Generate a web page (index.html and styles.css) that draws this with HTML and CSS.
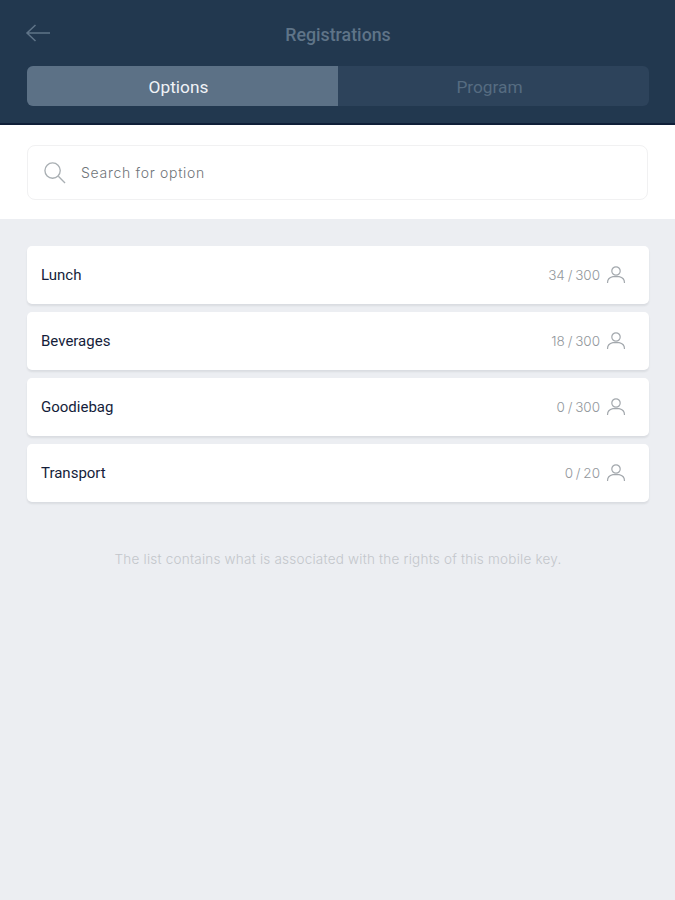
FILE: index.html
```html
<!DOCTYPE html>
<html lang="en">
<head>
    <meta charset="UTF-8">
    <meta name="viewport" content="width=device-width, initial-scale=1.0">
    <title>Registrations</title>
    <link rel="stylesheet" href="styles.css">
</head>
<body>
    <header class="header">
        <div class="topbar">
            <svg class="back-icon" width="26" height="20" viewBox="0 0 26 20" fill="none" stroke="#5f7488" stroke-width="1.5">
                <path d="M25 10H2M10.500 2L2 10l8.500 8"/>
            </svg>
            <h1 class="title">Registrations</h1>
        </div>
        <div class="tabs">
            <div class="tab tab-active">Options</div>
            <div class="tab">Program</div>
        </div>
    </header>

    <section class="search-section">
        <div class="search">
            <svg class="search-icon" width="23" height="23" viewBox="0 0 24 24" fill="none" stroke="#a9afb3" stroke-width="1.4">
                <circle cx="10" cy="10" r="8"/>
                <path d="M16 16l7 7"/>
            </svg>
            <span class="search-text">Search for option</span>
        </div>
    </section>

    <main class="content">
        <div class="list">
            <div class="row">
                <span class="row-name">Lunch</span>
                <span class="row-count">34 / 300</span>
                <svg class="person" width="20" height="20" viewBox="0 0 20 20" fill="none" stroke="#a3a8ad" stroke-width="1.2">
                    <circle cx="10" cy="6" r="4.200"/>
                    <path d="M1.500 18c0-3.500 2.500-5.700 5.300-6.300M18.500 18c0-3.500-2.500-5.700-5.300-6.300M6.800 11.700h6.400"/>
                </svg>
            </div>
            <div class="row">
                <span class="row-name">Beverages</span>
                <span class="row-count">18 / 300</span>
                <svg class="person" width="20" height="20" viewBox="0 0 20 20" fill="none" stroke="#a3a8ad" stroke-width="1.2">
                    <circle cx="10" cy="6" r="4.200"/>
                    <path d="M1.500 18c0-3.500 2.500-5.700 5.300-6.300M18.500 18c0-3.500-2.500-5.700-5.300-6.300M6.800 11.700h6.400"/>
                </svg>
            </div>
            <div class="row">
                <span class="row-name">Goodiebag</span>
                <span class="row-count">0 / 300</span>
                <svg class="person" width="20" height="20" viewBox="0 0 20 20" fill="none" stroke="#a3a8ad" stroke-width="1.2">
                    <circle cx="10" cy="6" r="4.200"/>
                    <path d="M1.500 18c0-3.500 2.500-5.700 5.300-6.300M18.500 18c0-3.500-2.500-5.700-5.300-6.300M6.800 11.700h6.400"/>
                </svg>
            </div>
            <div class="row">
                <span class="row-name">Transport</span>
                <span class="row-count">0 / 20</span>
                <svg class="person" width="20" height="20" viewBox="0 0 20 20" fill="none" stroke="#a3a8ad" stroke-width="1.2">
                    <circle cx="10" cy="6" r="4.200"/>
                    <path d="M1.500 18c0-3.500 2.500-5.700 5.300-6.300M18.500 18c0-3.500-2.500-5.700-5.300-6.300M6.800 11.700h6.400"/>
                </svg>
            </div>
        </div>
        <p class="note">The list contains what is associated with the rights of this mobile key.</p>
    </main>
</body>
</html>
```

FILE: styles.css
```css
* {
    margin: 0;
    padding: 0;
    box-sizing: border-box;
}

body {
    font-family: 'Inter', sans-serif;
    background: #eceef2;
    min-height: 100vh;
}

.header {
    background: #22384f;
    height: 125px;
    padding: 0 26px 0 27px;
    border-bottom: 2px solid #0f1f38;
}

.topbar {
    position: relative;
    height: 66px;
    display: flex;
    justify-content: center;
    align-items: center;
    padding-top: 2px;
}

.back-icon {
    position: absolute;
    left: -2px;
    top: 23px;
}

.title {
    font-family: 'Roboto', sans-serif;
    font-size: 17.8px;
    font-weight: 500;
    color: #5f7488;
}

.tabs {
    display: flex;
    height: 40px;
    background: #2d435b;
    border-radius: 6px;
    overflow: hidden;
}

.tab {
    flex: 1;
    display: flex;
    justify-content: center;
    align-items: center;
    padding: 2px 8px 0 0;
    font-family: 'Roboto', sans-serif;
    font-size: 17.3px;
    color: #566c81;
}

.tab-active {
    background: #5c7186;
    color: #f0f3f6;
}

.search-section {
    background: #fff;
    height: 94px;
    padding: 20px 27px 0;
}

.search {
    height: 55px;
    border: 1px solid #f1f1f2;
    border-radius: 8px;
    display: flex;
    align-items: center;
    padding-left: 15px;
    gap: 15px;
}

.search-text {
    font-size: 14px;
    font-weight: 300;
    letter-spacing: 0.7px;
    color: #6f7478;
}

.content {
    padding: 27px 26px 0 27px;
}

.list {
    display: flex;
    flex-direction: column;
    gap: 8px;
}

.row {
    height: 58px;
    background: #fff;
    border-radius: 5px;
    box-shadow: 0 2px 2px rgba(30, 40, 60, 0.09);
    display: flex;
    align-items: center;
    padding: 0 23px 0 14px;
}

.row-name {
    font-family: 'Roboto', sans-serif;
    font-size: 15px;
    color: #141d3a;
    flex: 1;
}

.row-count {
    font-size: 13.5px;
    font-weight: 300;
    word-spacing: -1px;
    color: #92979c;
    margin-right: 6px;
}

.note {
    margin-top: 49px;
    text-align: center;
    font-size: 13.5px;
    font-weight: 300;
    letter-spacing: 0.22px;
    color: #c3c6cb;
}
```
